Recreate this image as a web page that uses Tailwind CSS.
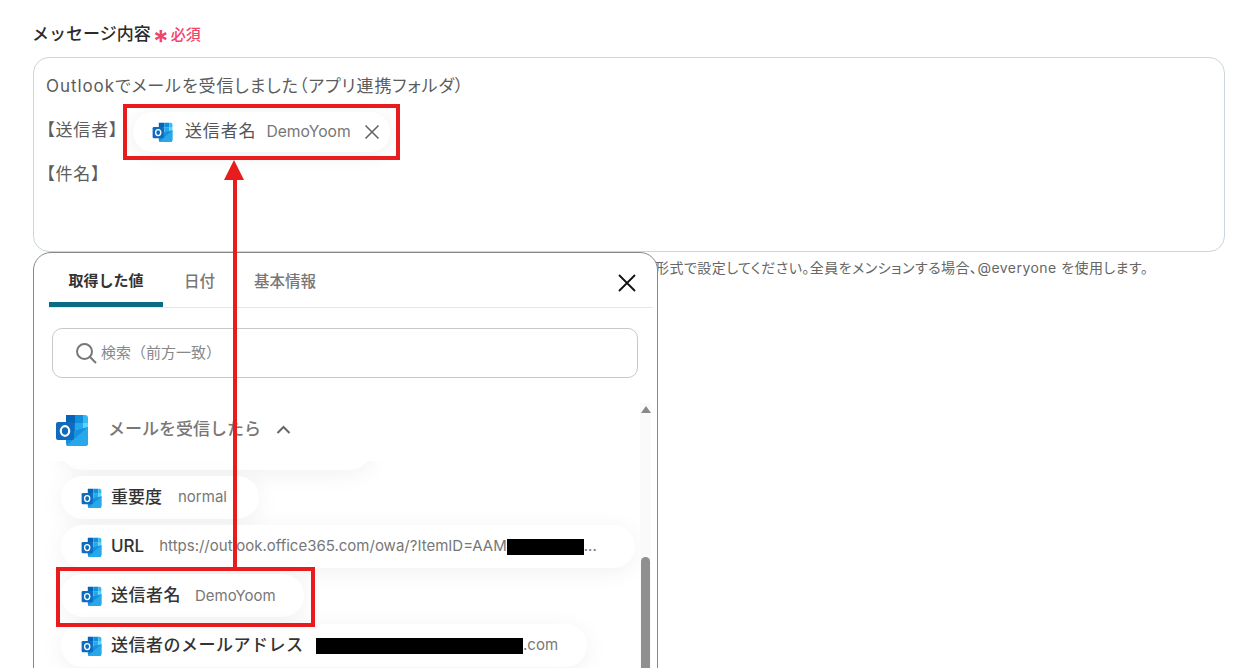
<!DOCTYPE html>
<html lang="ja">
<head>
    <meta charset="UTF-8">
    <title>メッセージ内容</title>
    <script src="https://cdn.jsdelivr.net/npm/@tailwindcss/browser@4"></script>
</head>
<body class="bg-white">
    <!-- Outlook icon -->
    <svg class="hidden">
        <symbol id="outlook" viewBox="0 0 34 32">
            <path d="M11 1h9v8h-9z" fill="#0364b8"/>
            <path d="M20 1h8v8h-8z" fill="#0f8fdc"/>
            <path d="M28 1h2a3 3 0 0 1 3 3v5h-5z" fill="#35b8f1"/>
            <path d="M11 9h9v8h-9z" fill="#0a78d4"/>
            <path d="M20 9h8v8h-8z" fill="#28a8ea"/>
            <path d="M28 9h5v8h-5z" fill="#50d9ff"/>
            <path d="M11 17h9v7h-9z" fill="#064a8c"/>
            <path d="M20 17h8v7h-8z" fill="#0a78d4"/>
            <path d="M11 19l22-6v16a3 3 0 0 1-3 3H14a3 3 0 0 1-3-3z" fill="#1490df"/>
            <path d="M11 32l22-19v16a3 3 0 0 1-3 3z" fill="#28a8ea"/>
            <rect x="1" y="8" width="18" height="18" rx="2" fill="#0f6cbd"/>
            <ellipse cx="10" cy="17" rx="4.2" ry="4.8" fill="none" stroke="#fff" stroke-width="2.2"/>
        </symbol>
    </svg>

    <div class="relative h-[668px] w-[1260px] overflow-hidden bg-white px-[33px] pt-[23px] font-['Inter','Noto_Sans_CJK_JP',sans-serif]">
        <!-- Label -->
        <div class="-ml-[1px] flex h-[24px] items-center text-[17px] font-medium text-[#2b2b2b]">
            メッセージ内容
            <span class="ml-[2px] mt-[12px] text-[30px] leading-none font-semibold text-[#f0436a]">*</span>
            <span class="ml-[2px] text-[15px] font-medium text-[#f0436a]">必須</span>
        </div>

        <!-- Message field -->
        <div class="mt-[10px] h-[195px] w-[1192px] rounded-[16px] border border-[#cbd5db] px-[12px] pt-[16px] text-[17px] tracking-[0.055em] text-[#5c5c5c] [font-feature-settings:'palt']">
            <div class="h-[24px] leading-[24px]">Outlookでメールを受信しました（アプリ連携フォルダ）</div>
            <div class="mt-[14px] flex h-[40px] items-center">
                <span class="w-[87px] -translate-y-[1px]">【送信者】</span>
                <div class="flex h-[40px] w-[257px] items-center rounded-full bg-white pl-[19px] shadow-[0_3px_20px_rgba(0,0,0,0.07)]">
                    <svg class="h-[20px] w-[21px]"><use href="#outlook"/></svg>
                    <span class="ml-[12px] text-[17px] tracking-[0.05em] text-[#555]">送信者名</span>
                    <span class="ml-[10px] text-[15.7px] tracking-normal text-[#777]">DemoYoom</span>
                    <svg class="ml-[13px] h-[16px] w-[16px]" viewBox="0 0 16 16" fill="none" stroke="#666" stroke-width="1.6"><path d="M1.5 1.5l13 13M14.5 1.5l-13 13"/></svg>
                </div>
            </div>
            <div class="mt-[10px] h-[24px] leading-[24px]">【件名】</div>
        </div>

        <!-- Helper text, mostly under the popup -->
        <p class="mt-[7px] whitespace-nowrap pl-[622px] text-[14px] leading-[18px] tracking-[0.033em] text-[#666] [font-feature-settings:'palt']">形式で設定してください。全員をメンションする場合、@everyone を使用します。</p>

        <!-- Value picker popup -->
        <div class="absolute left-[33px] top-[252px] flex h-[460px] w-[625px] flex-col overflow-hidden rounded-t-[18px] border border-[#888] bg-white">
            <div class="relative ml-[15px] mr-[4px] flex h-[55px] shrink-0 items-start border-b border-[#e4e6e8] text-[15.5px] font-medium text-[#777]">
                <div class="flex h-[54px] w-[114px] items-start justify-center border-b-[5px] border-[#0b6b83] pt-[17px] text-[15px] font-bold text-[#333]">取得した値</div>
                <div class="ml-[21px] pt-[17px]">日付</div>
                <div class="ml-[39px] pt-[17px]">基本情報</div>
                <svg class="absolute right-[17px] top-[21px] h-[18px] w-[18px]" viewBox="0 0 18 18" fill="none" stroke="#111" stroke-width="1.8"><path d="M1 1l16 16M17 1L1 17"/></svg>
            </div>

            <div class="ml-[18px] mt-[20px] flex h-[50px] w-[586px] shrink-0 items-center rounded-[10px] border border-[#c8c8c8] pl-[22px] text-[15px] text-[#888]">
                <svg class="h-[22px] w-[22px]" viewBox="0 0 22 22" fill="none" stroke="#777" stroke-width="2"><circle cx="9.5" cy="9.5" r="7.5"/><path d="M15 15l6 6"/></svg>
                <span class="ml-[4px]">検索（前方一致）</span>
            </div>

            <div class="ml-[21px] mt-[35px] flex h-[33px] shrink-0 items-center">
                <svg class="h-[32px] w-[34px]"><use href="#outlook"/></svg>
                <span class="ml-[19px] text-[17px] font-medium text-[#777]">メールを受信したら</span>
                <svg class="ml-[15px] h-[10px] w-[15px]" viewBox="0 0 15 10" fill="none" stroke="#666" stroke-width="2"><path d="M1.5 8L7.5 2l6 6"/></svg>
            </div>

            <!-- Value list -->
            <div class="mt-[15px] flex min-h-0 flex-1 flex-col gap-[6px] overflow-hidden pl-[27px]">
                <div class="-mt-[34px] h-[43px] w-[310px] shrink-0 rounded-full bg-white shadow-[0_4px_24px_rgba(0,0,0,0.06)]"></div>
                <div class="flex h-[43px] w-[198px] shrink-0 items-center rounded-full bg-white pl-[20px] shadow-[0_4px_24px_rgba(0,0,0,0.06)]">
                    <svg class="h-[20px] w-[21px]"><use href="#outlook"/></svg>
                    <span class="ml-[9px] text-[17px] font-medium text-[#333]">重要度</span>
                    <span class="ml-[16px] text-[15px] text-[#777]">normal</span>
                </div>
                <div class="flex h-[43px] w-[574px] shrink-0 items-center rounded-full bg-white pl-[20px] shadow-[0_4px_24px_rgba(0,0,0,0.06)]">
                    <svg class="h-[20px] w-[21px]"><use href="#outlook"/></svg>
                    <span class="ml-[9px] text-[17px] font-medium text-[#333]">URL</span>
                    <span class="ml-[15px] text-[15px] text-[#777]">https://outlook.office365.com/owa/?ItemID=AAM</span>
                    <span class="h-[16px] w-[77px] bg-black"></span>
                    <span class="text-[15px] text-[#777]">...</span>
                </div>
                <div class="flex h-[43px] w-[243px] shrink-0 items-center rounded-full bg-white pl-[20px] pt-[1px] shadow-[0_4px_24px_rgba(0,0,0,0.06)]">
                    <svg class="h-[20px] w-[21px]"><use href="#outlook"/></svg>
                    <span class="ml-[9px] text-[17px] font-medium tracking-[0.03em] text-[#333]">送信者名</span>
                    <span class="ml-[14px] text-[15px] text-[#777]">DemoYoom</span>
                </div>
                <div class="mt-[1px] flex h-[43px] w-[526px] shrink-0 items-center rounded-full bg-white pl-[20px] shadow-[0_4px_24px_rgba(0,0,0,0.06)]">
                    <svg class="h-[20px] w-[21px]"><use href="#outlook"/></svg>
                    <span class="ml-[9px] w-[192px] whitespace-nowrap text-[17px] font-medium tracking-[0.03em] text-[#333]">送信者のメールアドレス</span>
                    <span class="ml-[13px] h-[16px] w-[207px] bg-black"></span>
                    <span class="text-[15px] text-[#777]">.com</span>
                </div>
            </div>

            <!-- Scrollbar -->
            <div class="absolute bottom-0 right-[6px] top-[150px] w-[11px] bg-[#fafafa]">
                <div class="mx-auto mt-[3px] h-0 w-0 border-x-[5px] border-b-[7px] border-x-transparent border-b-[#8a8a8a]"></div>
                <div class="absolute left-[1px] top-[154px] h-[400px] w-[9px] rounded-t-full bg-[#8f8f8f]"></div>
            </div>
        </div>

        <!-- Red annotations -->
        <div class="absolute left-[123px] top-[104px] h-[56px] w-[277px] border-4 border-[#e81c1c]"></div>
        <div class="absolute left-[56px] top-[567px] h-[60px] w-[259px] border-4 border-[#e81c1c]"></div>
        <svg class="absolute left-[219px] top-[158px] h-[412px] w-[30px]" viewBox="0 0 30 412">
            <path d="M14 20h4v392h-4z" fill="#e81c1c"/>
            <path d="M15 2L25 22H5z" fill="#e81c1c"/>
        </svg>
    </div>
</body>
</html>
